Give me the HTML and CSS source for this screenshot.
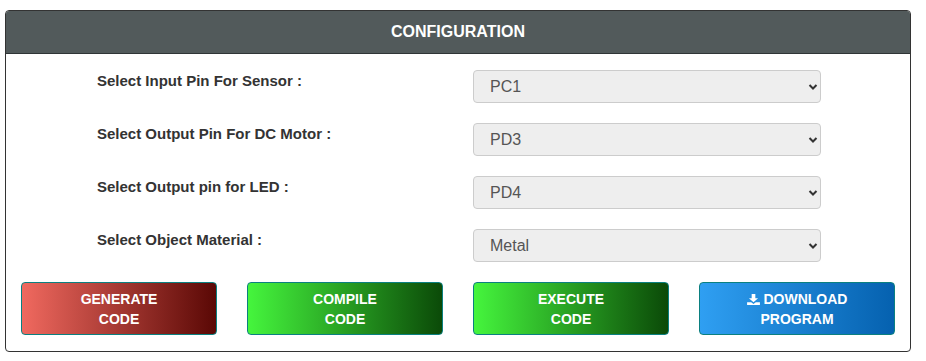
FILE: index.html
```html
<!DOCTYPE html>
<html lang="en">
<head>
    <meta charset="UTF-8">
    <meta name="viewport" content="width=device-width, initial-scale=1.0">
    <title>Configuration</title>
    <link rel="stylesheet" href="styles.css">
</head>
<body>
    <div class="panel">
        <div class="panel-heading">CONFIGURATION</div>
        <div class="panel-body">
            <div class="form-row">
                <label class="form-label">Select Input Pin For Sensor :</label>
                <div class="select-wrap">
                    <select class="form-select">
                        <option>PC1</option>
                        <option>PC2</option>
                    </select>
                    <svg class="chevron" viewBox="0 0 10 8"><path d="M1.5 2 L5 5.5 L8.5 2" fill="none" stroke="#333" stroke-width="2"/></svg>
                </div>
            </div>
            <div class="form-row">
                <label class="form-label">Select Output Pin For DC Motor :</label>
                <div class="select-wrap">
                    <select class="form-select">
                        <option>PD3</option>
                        <option>PD5</option>
                    </select>
                    <svg class="chevron" viewBox="0 0 10 8"><path d="M1.5 2 L5 5.5 L8.5 2" fill="none" stroke="#333" stroke-width="2"/></svg>
                </div>
            </div>
            <div class="form-row">
                <label class="form-label">Select Output pin for LED :</label>
                <div class="select-wrap">
                    <select class="form-select">
                        <option>PD4</option>
                        <option>PD6</option>
                    </select>
                    <svg class="chevron" viewBox="0 0 10 8"><path d="M1.5 2 L5 5.5 L8.5 2" fill="none" stroke="#333" stroke-width="2"/></svg>
                </div>
            </div>
            <div class="form-row">
                <label class="form-label">Select Object Material :</label>
                <div class="select-wrap">
                    <select class="form-select">
                        <option>Metal</option>
                        <option>Plastic</option>
                    </select>
                    <svg class="chevron" viewBox="0 0 10 8"><path d="M1.5 2 L5 5.5 L8.5 2" fill="none" stroke="#333" stroke-width="2"/></svg>
                </div>
            </div>
            <div class="btn-row">
                <button class="btn btn-red">GENERATE<br>CODE</button>
                <button class="btn btn-green">COMPILE<br>CODE</button>
                <button class="btn btn-green">EXECUTE<br>CODE</button>
                <button class="btn btn-blue"><svg class="dl-icon" viewBox="0 0 14 12"><path d="M5 0 H9 V4.5 H12 L7 9 L2 4.5 H5 Z" fill="#fff"/><path d="M0 9 H4.5 L7 11 L9.5 9 H14 V12 H0 Z" fill="#fff"/></svg> DOWNLOAD<br>PROGRAM</button>
            </div>
        </div>
    </div>
</body>
</html>
```

FILE: styles.css
```css
body, html {
    margin: 0;
    padding: 0;
    background: #fff;
    font-family: 'Liberation Sans', Arial, sans-serif;
}
body {
    padding: 10px 14px 0 5px;
}
.panel {
    border: 1px solid #333;
    border-radius: 4px;
    overflow: hidden;
    width: 904px;
}
.panel-heading {
    background: #525a5b;
    color: #fff;
    font-weight: bold;
    font-size: 16px;
    text-align: center;
    height: 42px;
    line-height: 42px;
    border-bottom: 1px solid #2f3536;
}
.panel-body {
    padding: 16px 15px 16px 15px;
}
.form-row {
    display: grid;
    grid-template-columns: 422px 348px;
    column-gap: 30px;
    margin-bottom: 20px;
}
.form-label {
    padding-left: 76px;
    padding-top: 3px;
    font-size: 15px;
    font-weight: bold;
    color: #333;
    line-height: 15px;
}
.select-wrap {
    position: relative;
}
.form-select {
    -webkit-appearance: none;
    appearance: none;
    width: 100%;
    height: 33px;
    background: #eee;
    border: 1px solid #ccc;
    border-radius: 4px;
    padding: 0 16px;
    font-family: 'Liberation Sans', Arial, sans-serif;
    font-size: 16px;
    color: #555;
    outline: none;
}
.chevron {
    position: absolute;
    right: 3px;
    top: 13px;
    width: 10px;
    height: 8px;
    pointer-events: none;
}
.btn-row {
    display: grid;
    grid-template-columns: repeat(4, 196px);
    column-gap: 30px;
    margin-top: 20px;
}
.btn {
    height: 53px;
    border: 1px solid #0b8080;
    border-radius: 4px;
    color: #fff;
    font-family: 'Liberation Sans', Arial, sans-serif;
    font-weight: bold;
    font-size: 14px;
    line-height: 20px;
    padding: 0;
    cursor: pointer;
}
.btn-red {
    background: linear-gradient(to right, #f0695f, #5a0805);
}
.btn-green {
    background: linear-gradient(to right, #45f53d, #0b4a08);
}
.btn-blue {
    background: linear-gradient(to right, #2f9ff2, #0561af);
}
.dl-icon {
    width: 13px;
    height: 11px;
    vertical-align: -1px;
}
```
